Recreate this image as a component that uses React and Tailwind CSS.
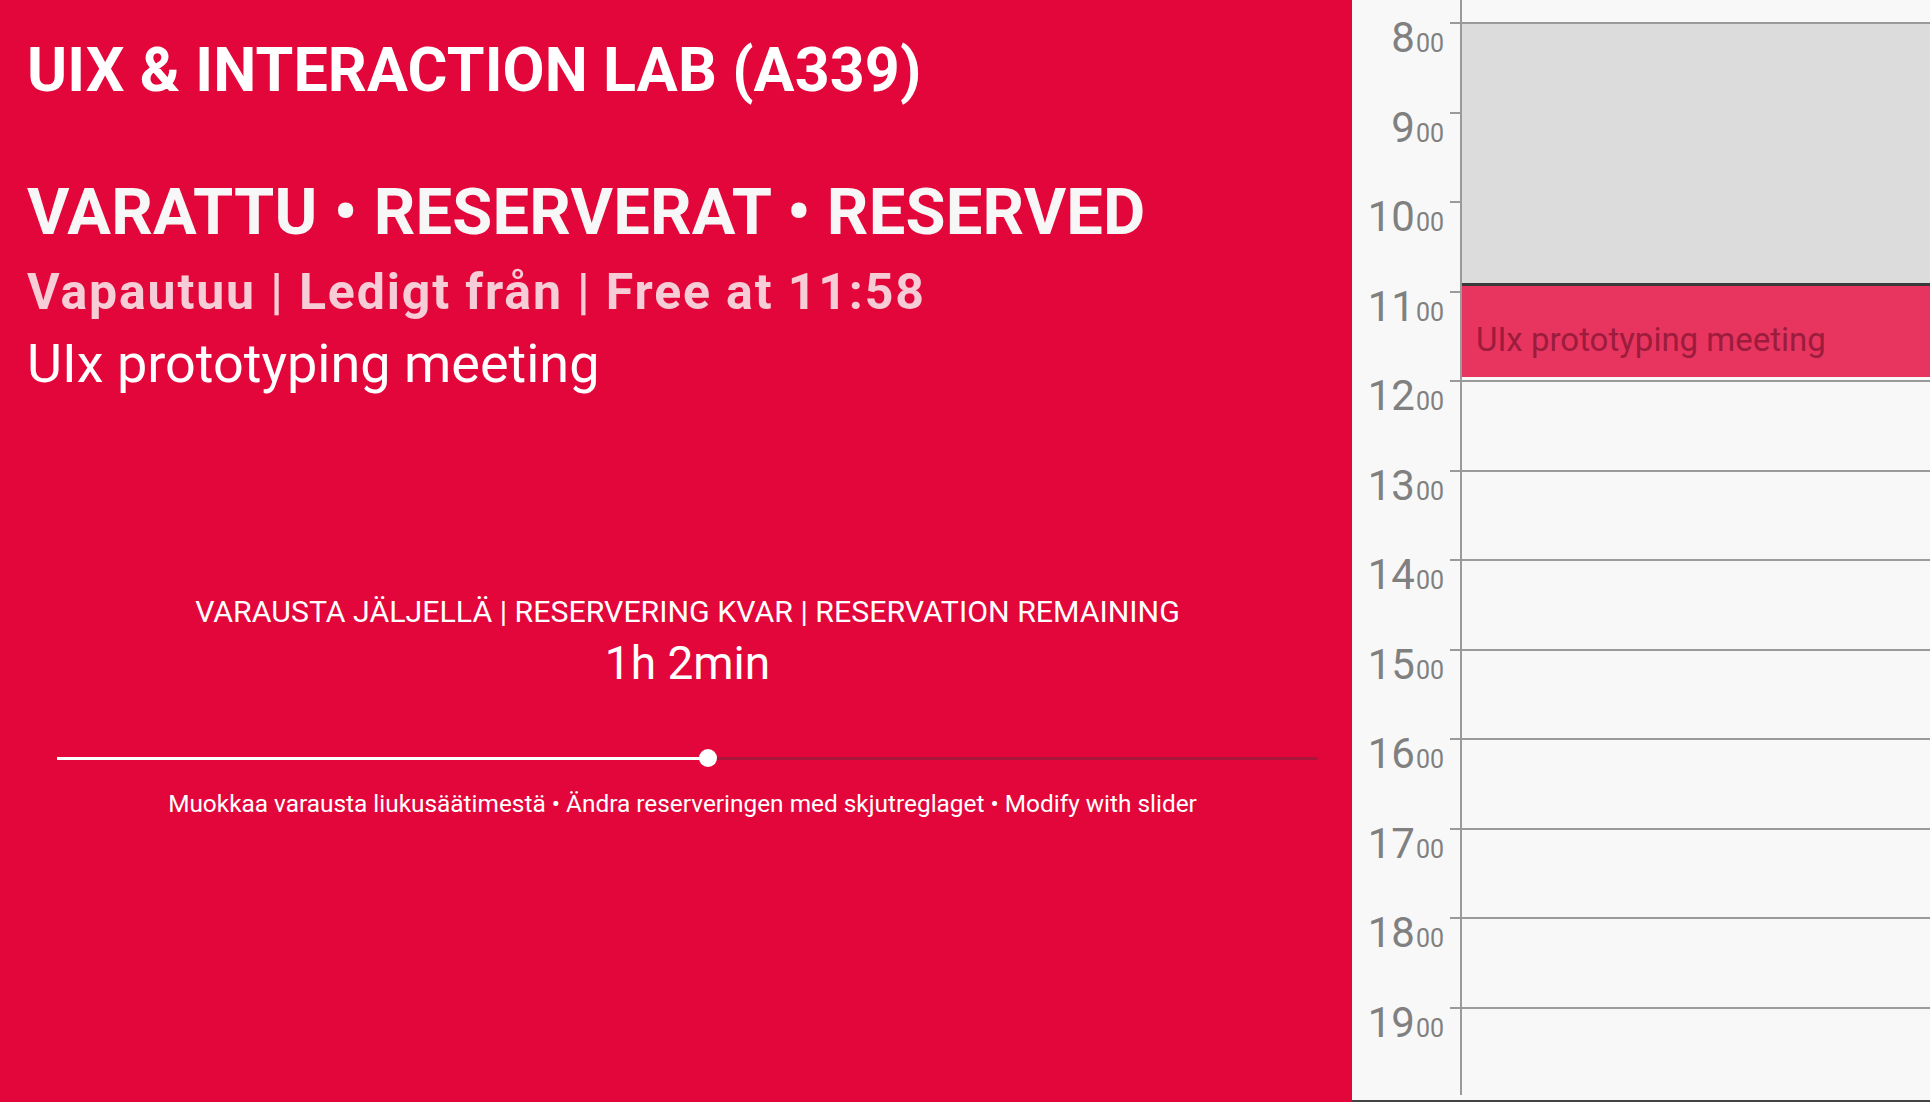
import React from 'react';

const HOURS = [8, 9, 10, 11, 12, 13, 14, 15, 16, 17, 18, 19];
const ROW = 89.5;

const RoomStatus = () => (
  <div className="flex-1 bg-[#e3063b] pl-[27px] flex flex-col text-white">
    <h1 className="pt-[40px] text-[61px] leading-none font-bold tracking-[0.1px]">
      UIX &amp; INTERACTION LAB (A339)
    </h1>
    <h2 className="mt-[79px] text-[65px] leading-none font-bold tracking-[0.2px] text-[#f7f7f7]">
      VARATTU • RESERVERAT • RESERVED
    </h2>
    <div className="mt-[22px] text-[50px] leading-none font-bold tracking-[1.85px] text-[#f6ccd7]">
      Vapautuu | Ledigt från | Free at 11:58
    </div>
    <div className="mt-[20px] text-[54px] leading-none">UIx prototyping meeting</div>

    <div className="mt-[206px] mr-[34px] pl-[30px] flex flex-col items-center">
      <div className="text-[30.3px] leading-none">
        VARAUSTA JÄLJELLÄ | RESERVERING KVAR | RESERVATION REMAINING
      </div>
      <div className="mt-[13px] text-[46px] leading-none">1h 2min</div>
      <div className="mt-[63px] w-full h-[18px] flex items-center">
        <div className="h-[3px] w-[651px] bg-white" />
        <div className="w-[18px] h-[18px] rounded-full bg-white -mx-[9px] relative" />
        <div className="h-[3px] flex-1 bg-[#a8173b]" />
      </div>
      <div className="mt-[25px] mr-[10px] text-[24.4px] leading-none">
        Muokkaa varausta liukusäätimestä • Ändra reserveringen med skjutreglaget • Modify with slider
      </div>
    </div>
  </div>
);

const DayCalendar = () => (
  <div className="w-[578px] bg-[#f8f8f8] flex border-b-2 border-[#444]">
    <div className="w-[108px] pt-[22px] flex flex-col">
      {HOURS.map((h) => (
        <div key={h} className="flex justify-end items-start" style={{ height: ROW }}>
          <div className="flex items-baseline text-[#808080] -mt-[5px] mr-[6px]">
            <span className="text-[42px] leading-none">{h}</span>
            <span className="text-[25px] leading-none ml-[1px]">00</span>
          </div>
          <div className="w-[10px] h-[2px] bg-[#9a9a9a]" />
        </div>
      ))}
    </div>
    <div className="flex-1 relative pt-[22px] border-l-2 border-[#9a9a9a] mb-[5px]">
      {HOURS.map((h) => (
        <div key={h} className="border-t-2 border-[#9a9a9a]" style={{ height: ROW }} />
      ))}
      <div className="absolute left-0 right-0 top-[24px] h-[259px] bg-[#dcdcdc]" />
      <div className="absolute left-0 right-0 top-[283px] h-[3px] bg-[#3a3a3a]" />
      <div className="absolute left-0 right-0 top-[286px] h-[91px] bg-[#e8355f] pl-[14px] pt-[37px]">
        <div className="text-[33px] leading-none text-[#9b1c3c]">UIx prototyping meeting</div>
      </div>
    </div>
  </div>
);

export default function App() {
  return (
    <div
      className="w-[1930px] h-[1102px] flex overflow-hidden"
      style={{ fontFamily: 'Roboto, "Liberation Sans", sans-serif' }}
    >
      <RoomStatus />
      <DayCalendar />
    </div>
  );
}
